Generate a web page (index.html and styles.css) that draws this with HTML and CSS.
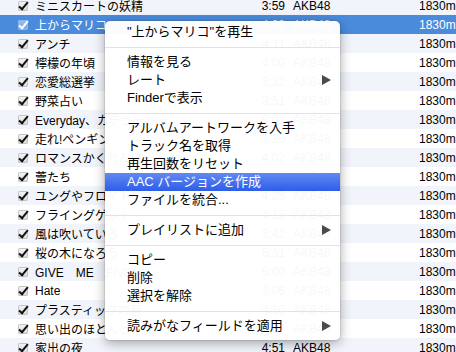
FILE: index.html
```html
<!DOCTYPE html>
<html lang="ja">

<head>
	<meta charset="UTF-8">
	<meta name="viewport" content="width=device-width, initial-scale=1.0">
	<title>ライブラリ</title>
	<link rel="stylesheet" href="styles.css">
</head>

<body>
	<div class="list">
		<div class="row"><span class="chk"></span><span class="title">ミニスカートの妖精</span><span class="time">3:59</span><span class="artist">AKB48</span><span class="album">1830m</span></div>
		<div class="row sel"><span class="chk"></span><span class="title">上からマリコ</span><span class="time">4:33</span><span class="artist">AKB48</span><span class="album">1830m</span></div>
		<div class="row"><span class="chk"></span><span class="title">アンチ</span><span class="time">4:11</span><span class="artist">AKB48</span><span class="album">1830m</span></div>
		<div class="row"><span class="chk"></span><span class="title">檸檬の年頃</span><span class="time">4:00</span><span class="artist">AKB48</span><span class="album">1830m</span></div>
		<div class="row"><span class="chk"></span><span class="title">恋愛総選挙</span><span class="time">3:32</span><span class="artist">AKB48</span><span class="album">1830m</span></div>
		<div class="row"><span class="chk"></span><span class="title">野菜占い</span><span class="time">3:51</span><span class="artist">AKB48</span><span class="album">1830m</span></div>
		<div class="row"><span class="chk"></span><span class="title">Everyday、カチューシャ</span><span class="time">5:01</span><span class="artist">AKB48</span><span class="album">1830m</span></div>
		<div class="row"><span class="chk"></span><span class="title">走れ!ペンギン</span><span class="time">3:25</span><span class="artist">AKB48</span><span class="album">1830m</span></div>
		<div class="row"><span class="chk"></span><span class="title">ロマンスかくれんぼ</span><span class="time">4:02</span><span class="artist">AKB48</span><span class="album">1830m</span></div>
		<div class="row"><span class="chk"></span><span class="title">蕾たち</span><span class="time">4:46</span><span class="artist">AKB48</span><span class="album">1830m</span></div>
		<div class="row"><span class="chk"></span><span class="title">ユングやフロイトの場合</span><span class="time">4:28</span><span class="artist">AKB48</span><span class="album">1830m</span></div>
		<div class="row"><span class="chk"></span><span class="title">フライングゲット</span><span class="time">4:18</span><span class="artist">AKB48</span><span class="album">1830m</span></div>
		<div class="row"><span class="chk"></span><span class="title">風は吹いている</span><span class="time">3:42</span><span class="artist">AKB48</span><span class="album">1830m</span></div>
		<div class="row"><span class="chk"></span><span class="title">桜の木になろう</span><span class="time">5:31</span><span class="artist">AKB48</span><span class="album">1830m</span></div>
		<div class="row"><span class="chk"></span><span class="title">GIVE　ME　FIVE!</span><span class="time">5:00</span><span class="artist">AKB48</span><span class="album">1830m</span></div>
		<div class="row"><span class="chk"></span><span class="title">Hate</span><span class="time">3:06</span><span class="artist">AKB48</span><span class="album">1830m</span></div>
		<div class="row"><span class="chk"></span><span class="title">プラスティックの唇</span><span class="time">4:10</span><span class="artist">AKB48</span><span class="album">1830m</span></div>
		<div class="row"><span class="chk"></span><span class="title">思い出のほとんど</span><span class="time">4:37</span><span class="artist">AKB48</span><span class="album">1830m</span></div>
		<div class="row"><span class="chk"></span><span class="title">家出の夜</span><span class="time">4:51</span><span class="artist">AKB48</span><span class="album">1830m</span></div>
	</div>

	<div class="menu">
		<div class="item">"上からマリコ"を再生</div>
		<div class="sep"></div>
		<div class="item">情報を見る</div>
		<div class="item sub">レート</div>
		<div class="item">Finderで表示</div>
		<div class="sep"></div>
		<div class="item">アルバムアートワークを入手</div>
		<div class="item">トラック名を取得</div>
		<div class="item">再生回数をリセット</div>
		<div class="item hl">AAC バージョンを作成</div>
		<div class="item">ファイルを統合...</div>
		<div class="sep"></div>
		<div class="item sub">プレイリストに追加</div>
		<div class="sep"></div>
		<div class="item">コピー</div>
		<div class="item">削除</div>
		<div class="item">選択を解除</div>
		<div class="sep"></div>
		<div class="item sub">読みがなフィールドを適用</div>
	</div>
</body>

</html>
```

FILE: styles.css
```css
body {
	margin: 0;
	width: 456px;
	height: 352px;
	overflow: hidden;
	position: relative;
	background: #fff;
	font-family: "Liberation Sans", "Noto Sans CJK JP", sans-serif;
}

.list {
	margin-top: -4px;
}

.row {
	display: flex;
	align-items: center;
	height: 19px;
	font-size: 12px;
	color: #000;
	white-space: nowrap;
}
.row > span {
	flex: none;
}
.row:nth-child(odd) {
	background: #f1f5fb;
}
.row.sel {
	background: #4a8bdc;
	color: #fff;
}

/* チェックボックス */
.chk {
	position: relative;
	width: 10px;
	height: 10px;
	margin: 0 7px 0 18px;
	border-radius: 2px;
	background: linear-gradient(#f6f6f6, #d9d9d9);
	box-shadow: inset 0 0 0 1px #c4c4c4;
}
.chk::after {
	content: "";
	position: absolute;
	left: 3px;
	top: -1px;
	width: 3px;
	height: 8px;
	border: solid #111;
	border-width: 0 2px 2px 0;
	transform: rotate(40deg);
}
.sel .chk {
	background: linear-gradient(#9cc0ee, #7aa7e6);
	box-shadow: inset 0 0 0 1px #8fb5ea;
}
.sel .chk::after {
	border-color: #fff;
}

.title {
	width: 215px;
	overflow: hidden;
}
.time {
	width: 35px;
	text-align: right;
}
.artist {
	width: 126px;
	margin-left: 8px;
}

/* コンテキストメニュー */
.menu {
	position: absolute;
	left: 105px;
	top: 21px;
	width: 235px;
	padding: 2px 0 5px;
	background: rgba(255, 255, 255, 0.97);
	border-radius: 5px;
	box-shadow: 0 3px 12px rgba(0, 0, 0, 0.35), 0 0 0 1px rgba(0, 0, 0, 0.08);
	font-size: 13px;
	color: #000;
}
.item {
	position: relative;
	height: 18px;
	line-height: 18px;
	padding-left: 22px;
	white-space: nowrap;
}
.item.sub::after {
	content: "";
	position: absolute;
	right: 9px;
	top: 4px;
	border-style: solid;
	border-width: 5px 0 5px 9px;
	border-color: transparent transparent transparent #4a4a4a;
}
.item.hl {
	background: linear-gradient(#6289f2, #2e5de8);
	color: #fff;
}
.sep {
	height: 1px;
	margin: 6px 0 5px;
	background: #e2e2e2;
}
```
